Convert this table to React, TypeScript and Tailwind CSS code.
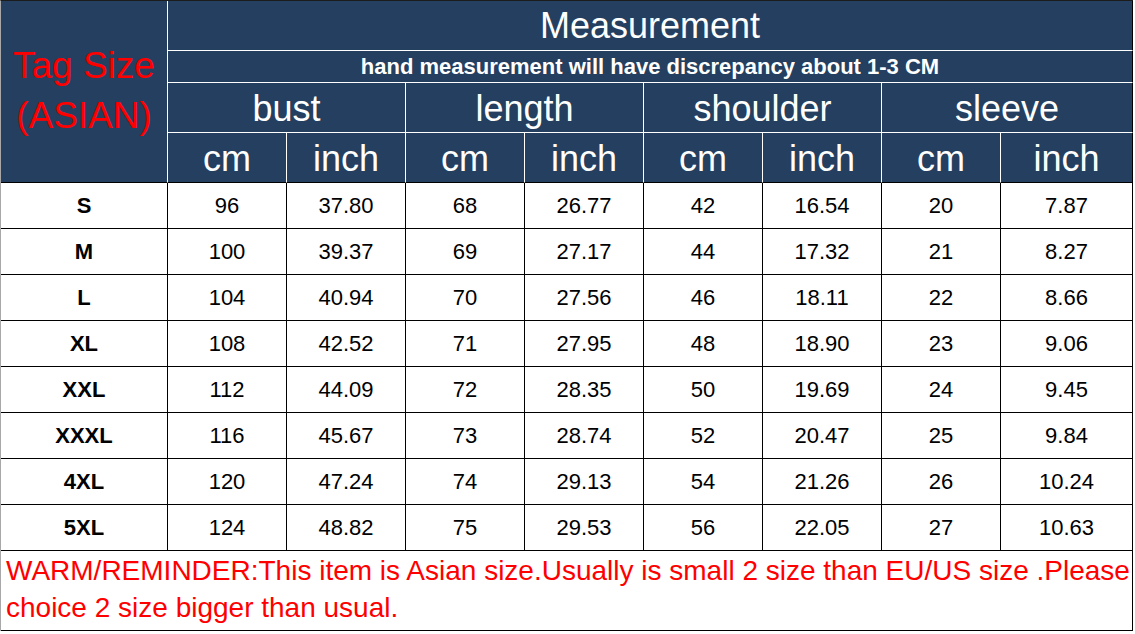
const headFont = { fontFamily: '"Liberation Sans", Arial, sans-serif' };

const groups = ["bust", "length", "shoulder", "sleeve"];

const rows: string[][] = [
  ["S", "96", "37.80", "68", "26.77", "42", "16.54", "20", "7.87"],
  ["M", "100", "39.37", "69", "27.17", "44", "17.32", "21", "8.27"],
  ["L", "104", "40.94", "70", "27.56", "46", "18.11", "22", "8.66"],
  ["XL", "108", "42.52", "71", "27.95", "48", "18.90", "23", "9.06"],
  ["XXL", "112", "44.09", "72", "28.35", "50", "19.69", "24", "9.45"],
  ["XXXL", "116", "45.67", "73", "28.74", "52", "20.47", "25", "9.84"],
  ["4XL", "120", "47.24", "74", "29.13", "54", "21.26", "26", "10.24"],
  ["5XL", "124", "48.82", "75", "29.53", "56", "22.05", "27", "10.63"],
];

export default function App() {
  return (
    <div className="w-[1135px] h-[634px] bg-white" style={headFont}>
      <div className="grid grid-cols-[167px_repeat(7,119px)_132px] grid-rows-[50px_32px_50px_50px_repeat(8,46px)_80px] border-t border-l border-t-[#1c1c1c] border-l-[#a8a8a8] w-[1133px]">
        {/* tag size */}
        <div className="row-span-4 bg-[#243f60] border-r border-r-white border-b border-b-black flex items-center justify-center text-center text-[37px] leading-[50px] text-[#ff0000] pb-[2px]">
          Tag Size
          <br />
          (ASIAN)
        </div>

        <div className="col-span-8 bg-[#243f60] border-b border-b-white border-r border-r-black flex items-center justify-center text-white text-[36px] pt-[1px]">
          Measurement
        </div>
        <div className="col-span-8 bg-[#243f60] border-b border-b-white border-r border-r-black flex items-center justify-center text-white text-[22px] font-bold">
          hand measurement will have discrepancy about 1-3 CM
        </div>

        {groups.map((g, i) => (
          <div
            key={g}
            className={`col-span-2 bg-[#243f60] border-b border-b-white flex items-center justify-center text-white text-[36px] pt-[2px] ${
              i === 3 ? "border-r border-r-black" : "border-r border-r-white"
            }`}
          >
            {g}
          </div>
        ))}

        {groups.flatMap((g, i) =>
          ["cm", "inch"].map((u, j) => (
            <div
              key={g + u}
              className={`bg-[#243f60] border-b border-b-black flex items-center justify-center text-white text-[36px] pt-[2px] ${
                i === 3 && j === 1 ? "border-r border-r-black" : "border-r border-r-white"
              }`}
            >
              {u}
            </div>
          ))
        )}

        {rows.map((r) =>
          r.map((v, k) => (
            <div
              key={r[0] + k}
              className={`border-r border-b border-black flex items-center justify-center text-black text-[22px] ${
                k === 0 ? "font-bold" : ""
              }`}
            >
              {v}
            </div>
          ))
        )}

        <div className="col-span-9 border-r border-b border-black text-[#ff0000] text-[28px] leading-[37px] pl-[5px] pt-[1px] whitespace-nowrap">
          WARM/REMINDER:This item is Asian size.Usually is small 2 size than EU/US size .Please
          <br />
          choice 2 size bigger than usual.
        </div>
      </div>
    </div>
  );
}
